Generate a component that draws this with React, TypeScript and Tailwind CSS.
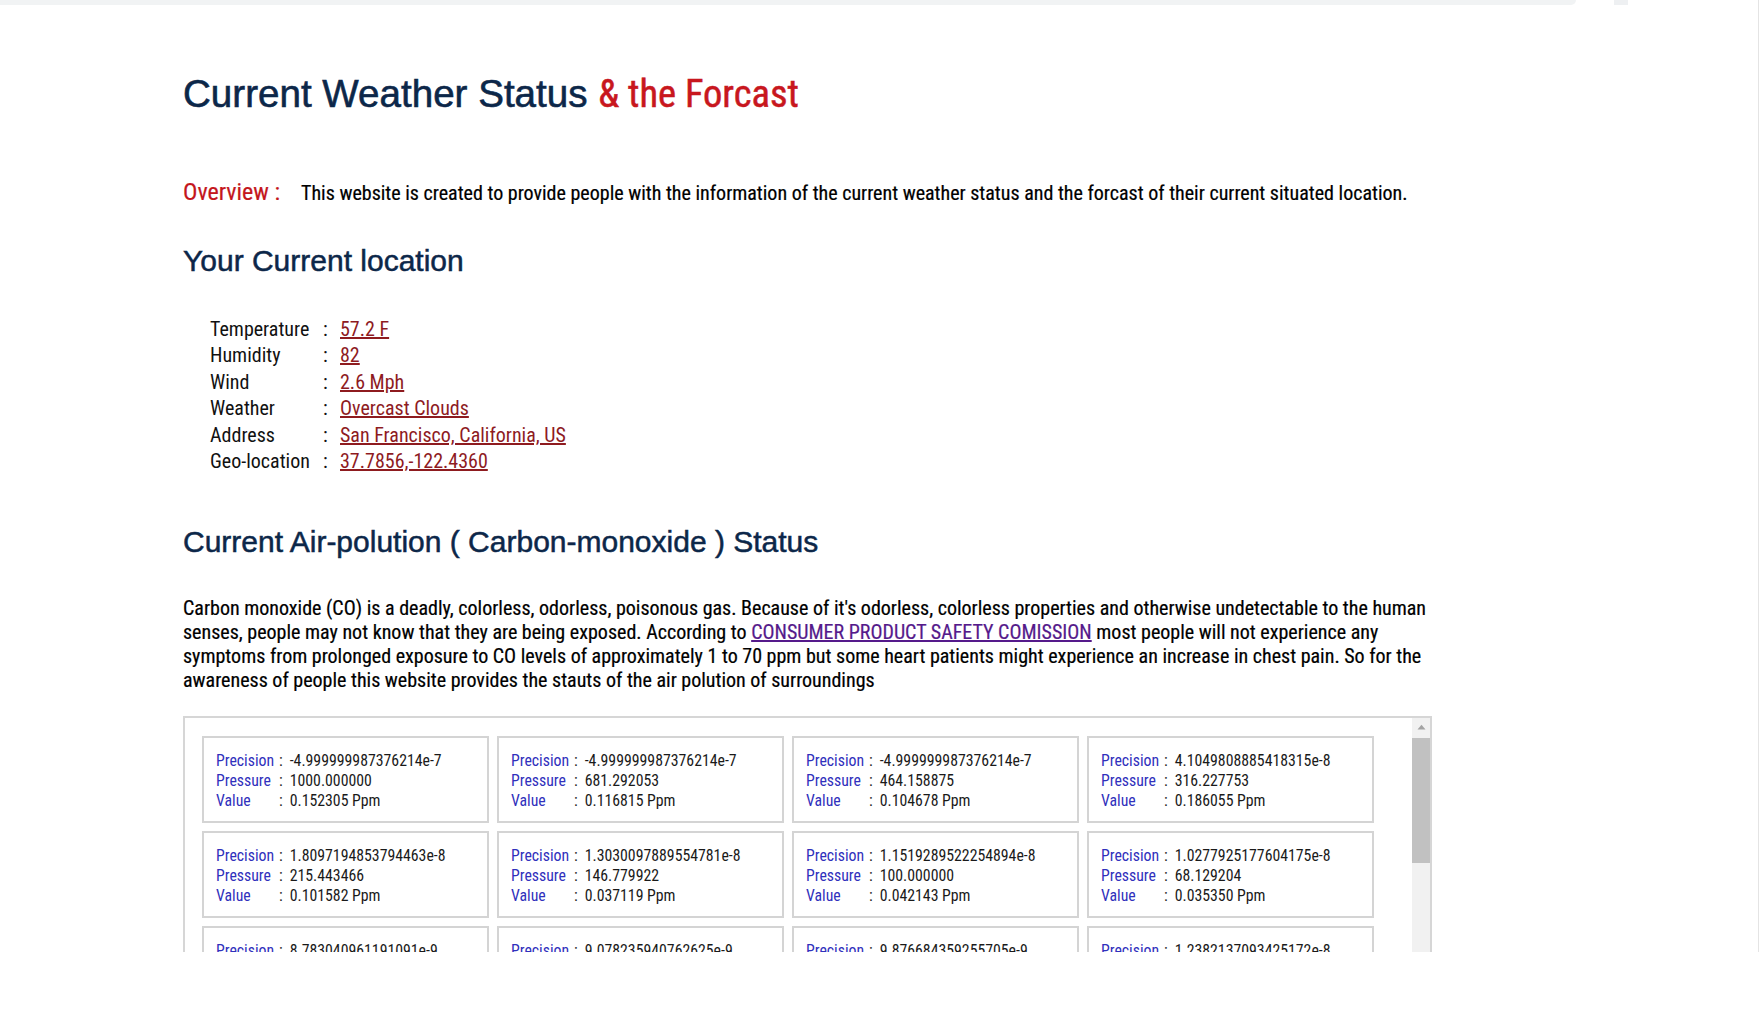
import React from 'react';

const readings = [
  { precision: '-4.999999987376214e-7', pressure: '1000.000000', value: '0.152305' },
  { precision: '-4.999999987376214e-7', pressure: '681.292053', value: '0.116815' },
  { precision: '-4.999999987376214e-7', pressure: '464.158875', value: '0.104678' },
  { precision: '4.1049808885418315e-8', pressure: '316.227753', value: '0.186055' },
  { precision: '1.8097194853794463e-8', pressure: '215.443466', value: '0.101582' },
  { precision: '1.3030097889554781e-8', pressure: '146.779922', value: '0.037119' },
  { precision: '1.1519289522254894e-8', pressure: '100.000000', value: '0.042143' },
  { precision: '1.0277925177604175e-8', pressure: '68.129204', value: '0.035350' },
  { precision: '8.783040961191091e-9', pressure: '46.415888', value: '0.034511' },
  { precision: '9.078235940762625e-9', pressure: '31.622776', value: '0.031203' },
  { precision: '9.876684359255705e-9', pressure: '21.544347', value: '0.028817' },
  { precision: '1.2382137093425172e-8', pressure: '14.677993', value: '0.026944' },
];

const location = [
  { label: 'Temperature', value: '57.2 F' },
  { label: 'Humidity', value: '82' },
  { label: 'Wind', value: '2.6 Mph' },
  { label: 'Weather', value: 'Overcast Clouds' },
  { label: 'Address', value: 'San Francisco, California, US' },
  { label: 'Geo-location', value: '37.7856,-122.4360' },
];

const ReadingCard = ({ precision, pressure, value }: { precision: string; pressure: string; value: string }) => (
  <div className="w-[287px] h-[87px] border-2 border-[#d4d4d4] px-[12px] pt-[13px] pb-[11px] text-[15.8px] leading-[20px]">
    <div className="flex">
      <span className="w-[63px] text-[#3030bc]">Precision</span>
      <span className="text-[#1a1a1a]">:</span>
      <span className="ml-[7px] text-[#1a1a1a]">{precision}</span>
    </div>
    <div className="flex">
      <span className="w-[63px] text-[#3030bc]">Pressure</span>
      <span className="text-[#1a1a1a]">:</span>
      <span className="ml-[7px] text-[#1a1a1a]">{pressure}</span>
    </div>
    <div className="flex">
      <span className="w-[63px] text-[#3030bc]">Value</span>
      <span className="text-[#1a1a1a]">:</span>
      <span className="ml-[7px] text-[#1a1a1a]">{value} Ppm</span>
    </div>
  </div>
);

export default function App() {
  return (
    <div className="h-[1017px] w-full bg-white overflow-hidden font-['Roboto_Condensed','Roboto',sans-serif] font-stretch-condensed">
      <div className="h-[952px] overflow-hidden border-r border-[#e4e4e4]">
        {/* browser chrome remnant */}
        <div className="flex h-[5px]">
          <div className="w-[1576px] bg-[#f1f3f4] rounded-br-[10px]"></div>
          <div className="ml-[38px] w-[14px] bg-[#eef0f2]"></div>
        </div>

        <main className="pl-[183px] pt-[66px] w-[1430px]">
          <h1 className="text-[38.6px] leading-[46px] text-[#0c2749] font-['Liberation_Sans',Arial,sans-serif] font-stretch-normal [-webkit-text-stroke:0.6px_#0c2749]">
            Current Weather Status{' '}
            <span className="text-[#c8171e] text-[38.5px] font-['Roboto_Condensed','Roboto',sans-serif] font-stretch-condensed [-webkit-text-stroke:0.5px_#c8171e]">& the Forcast</span>
          </h1>

          <div className="mt-[60px] flex items-baseline leading-[30px]">
            <span className="text-[24px] text-[#c4161c] mr-[21px] [-webkit-text-stroke:0.2px_#c4161c]">Overview :</span>
            <span className="text-[20px] text-black [-webkit-text-stroke:0.2px_#000]">
              This website is created to provide people with the information of the current weather status and the forcast of their current situated location.
            </span>
          </div>

          <h2 className="mt-[35px] text-[30px] leading-[36px] text-[#0c2749] font-['Liberation_Sans',Arial,sans-serif] font-stretch-normal [-webkit-text-stroke:0.5px_#0c2749]">
            Your Current location
          </h2>

          <div className="mt-[37px] ml-[27px] grid grid-cols-[113px_17px_auto] text-[20px] leading-[26.4px] w-fit">
            {location.map((row) => (
              <React.Fragment key={row.label}>
                <span className="text-[#111]">{row.label}</span>
                <span className="text-[#111]">:</span>
                <a href="#" className="text-[#8e1b1f] underline">{row.value}</a>
              </React.Fragment>
            ))}
          </div>

          <h2 className="mt-[50px] text-[30px] leading-[36px] text-[#0c2749] font-['Liberation_Sans',Arial,sans-serif] font-stretch-normal [-webkit-text-stroke:0.5px_#0c2749]">
            Current Air-polution ( Carbon-monoxide ) Status
          </h2>

          <p className="mt-[36px] text-[20px] leading-[24px] text-black w-[1245px] [-webkit-text-stroke:0.2px_#000]">
            Carbon monoxide (CO) is a deadly, colorless, odorless, poisonous gas. Because of it's odorless, colorless properties and otherwise undetectable to the human senses, people may not know that they are being exposed. According to{' '}
            <a href="#" className="text-[#551a8b] underline [-webkit-text-stroke:0.2px_#551a8b]">CONSUMER PRODUCT SAFETY COMISSION</a>{' '}
            most people will not experience any symptoms from prolonged exposure to CO levels of approximately 1 to 70 ppm but some heart patients might experience an increase in chest pain. So for the awareness of people this website provides the stauts of the air polution of surroundings
          </p>

          <div className="mt-[24px] w-[1249px] h-[290px] border-2 border-[#d6d6d6] flex">
            <div className="flex-1 overflow-hidden pt-[18px] pl-[17px] grid grid-cols-[repeat(4,287px)] gap-[8px] content-start">
              {readings.map((r, i) => (
                <ReadingCard key={i} {...r} />
              ))}
            </div>
            {/* scrollbar */}
            <div className="w-[18px] bg-[#f1f1f1] flex flex-col items-center">
              <div className="h-[17px] flex items-center justify-center">
                <svg width="9" height="6" viewBox="0 0 9 6">
                  <path d="M0.5 5.5 L4.5 0.8 L8.5 5.5 Z" fill="#a3a3a3" />
                </svg>
              </div>
              <div className="mt-[3px] h-[125px] w-full bg-[#c1c1c1]"></div>
            </div>
          </div>
        </main>
      </div>
    </div>
  );
}
